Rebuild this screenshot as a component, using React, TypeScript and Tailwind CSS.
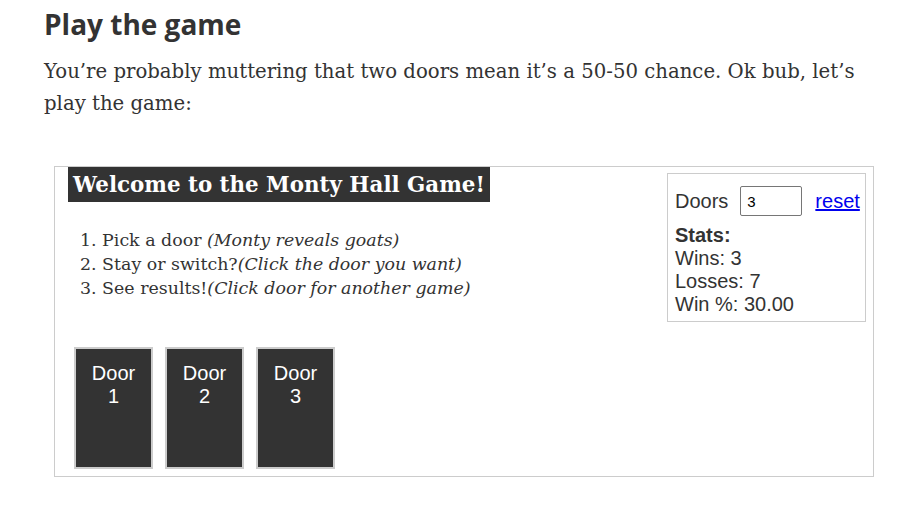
import React from "react";

const doors = [1, 2, 3];

const App = () => {
  return (
    <div className="min-h-[523px] bg-white px-[44px] pt-[6px] text-[#333]">
      <h2 className="font-['Open_Sans',sans-serif] text-[28px] font-bold leading-[36px] text-[#333]">
        Play the game
      </h2>
      <p className="mt-[14px] w-[830px] font-['DejaVu_Serif',serif] text-[19.7px] leading-[32px] text-[#333]">
        You’re probably muttering that two doors mean it’s a 50-50 chance. Ok
        bub, let’s
        <br />
        play the game:
      </p>

      <div className="ml-[10px] mt-[46px] flex h-[311px] w-[820px] border border-[#ccc] pl-[13px] pr-[7px]">
        <div className="flex-1">
          <h1 className="inline-block bg-[#333] px-[5px] font-['DejaVu_Serif',serif] text-[21.4px] font-bold leading-[35px] text-white">
            Welcome to the Monty Hall Game!
          </h1>
          <ol className="mt-[26px] pl-[12px] font-['DejaVu_Serif',serif] text-[17.4px] leading-[24px] text-[#333]">
            <li>
              1. Pick a door <i>(Monty reveals goats)</i>
            </li>
            <li>
              2. Stay or switch?<i>(Click the door you want)</i>
            </li>
            <li>
              3. See results!<i>(Click door for another game)</i>
            </li>
          </ol>

          <div className="mt-[47px] flex gap-[12px] pl-[6px]">
            {doors.map((d) => (
              <div
                key={d}
                className="flex h-[122px] w-[79px] flex-col items-center border-2 border-[#ccc] bg-[#333] pt-[13px] font-['Liberation_Sans',sans-serif] text-[20px] leading-[23px] text-white"
              >
                <span>Door</span>
                <span>{d}</span>
              </div>
            ))}
          </div>
        </div>

        {/* Stats */}
        <div className="mt-[6px] h-[149px] w-[199px] border border-[#ccc] px-[7px] pt-[12px] font-['Liberation_Sans',sans-serif] text-[20px] leading-[23px] text-[#333]">
          <div className="flex items-center">
            <span>Doors</span>
            <input
              type="text"
              defaultValue="3"
              className="ml-[12px] h-[30px] w-[62px] rounded-[2px] border border-[#767676] px-[6px] text-[15px] text-black"
            />
            <a href="#" className="ml-[13px] text-[#0000ee] underline">
              reset
            </a>
          </div>
          <div className="mt-[8px] font-bold">Stats:</div>
          <div>Wins: 3</div>
          <div>Losses: 7</div>
          <div>Win %: 30.00</div>
        </div>
      </div>
    </div>
  );
};

export default App;
